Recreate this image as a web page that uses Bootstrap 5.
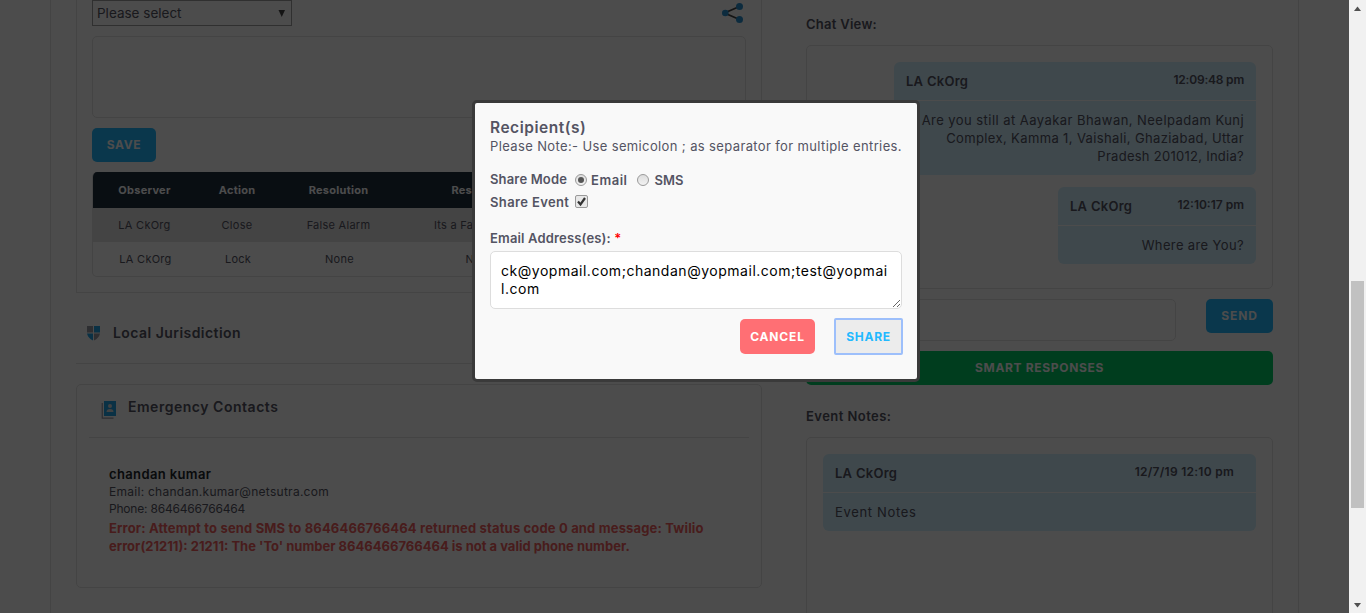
<!DOCTYPE html>
<html lang="en"><head><meta charset="utf-8"><title>Event details</title>
<link href="https://cdn.jsdelivr.net/npm/bootstrap@5.3.0/dist/css/bootstrap.min.css" rel="stylesheet">
<script src="https://cdn.jsdelivr.net/npm/bootstrap@5.3.0/dist/js/bootstrap.bundle.min.js"></script>
<style>
html,body{height:100%;overflow:hidden}
body{font-family:Inter,"Open Sans",sans-serif;font-size:13px;line-height:18px;color:#545463;background:#fff}
/* letter-spacing steps */
.t0{letter-spacing:-.2px}.t2{letter-spacing:.16px}.t3{letter-spacing:.27px}.t4{letter-spacing:.37px}
.t45{letter-spacing:.45px}.t5{letter-spacing:.52px}.t7{letter-spacing:.67px}.t8{letter-spacing:.85px}
.page-area{width:1349px;height:613px;overflow:hidden}
.sheet{margin-left:50px;width:1249px;height:613px;border:solid #e3e3e3;border-width:0 1px;padding-left:25px}
.main-col{width:686px}
.side-col{width:467px;margin-left:44px;padding-top:15px}
.edge{border:1px solid #e3e3e3}
.soft{border-radius:5px}
.drop-2{padding-top:2px}
.observe{height:293px;border-top:0;padding:0 15px}
.pick{width:200px;height:26px;border:1px solid #a0a0a0;padding:0 5px 0 4px;line-height:25px;font-size:13.5px}
.comment-box{height:82px;margin-top:10px}
.cta{height:34px;color:#fff;font-size:12px;font-weight:700;border-radius:5px;display:flex;align-items:center;justify-content:center}
.save-btn{width:64px;background:#22b9ff;margin:10px 0}
.send-btn{width:67px;background:#22b9ff}
.smart-btn{background:#00cc66;margin-top:10px}
.log{border-radius:5px;overflow:hidden;height:105px;font-size:11px;border:1px solid #e3e3e3;border-width:0 1px 1px}
.log-row{height:34px;line-height:34px;display:grid;grid-template-columns:105px 80px 123px 158px 1fr;text-align:center;margin:0 -1px}
.log-row.log-last{margin:0}
.log-head{height:36px;line-height:36px;background:#20303f;color:#fff;font-weight:700}
.log-odd{background:#e3e3e3}
.head-row{font-size:14px;font-weight:600}
.local{height:71px;padding:10px 0 0 10px;margin-bottom:20px;border-bottom:1px solid #e3e3e3}
.contacts{height:204px;padding:0 12px}
.contacts .head-row{height:53px;border-bottom:1px solid #e3e3e3;padding:0 0 8px 12px}
.contact-info{padding:27px 20px 0;font-size:12px;line-height:17px;white-space:nowrap}
.contact-name{font-size:13px;line-height:18px;font-weight:600;color:#212529}
.err{font-size:13px;line-height:18px;font-weight:700;color:#f06060;margin-top:2px}
.chat{height:244px;margin-top:12px;padding:16px}
.bubble{background:#d2f0ff;border-radius:6px;overflow:hidden}
.bubble-top{height:38px;padding:10px 12px 0;font-weight:600;display:flex;justify-content:space-between}
.stamp{font-size:12px;line-height:16px}
.bubble-body{border-top:1px solid #fff;padding:10px 12px}
.wide{width:362px;height:113px}
.narrow{width:198px;height:77px;margin-top:12px}
.reply{width:370px;height:42px}
.notes-title{margin-top:22px}
.notes{height:200px;margin-top:12px;padding:16px}
.notes .stamp{margin-right:10px}
.dim{position:fixed;left:0;top:0;width:1349px;height:613px;background:rgba(0,0,0,.7)}
.share-box{width:448px;height:282px;margin-top:100px;margin-left:472px;background:#f9f9f9;border:3px solid #3a3a3a;border-radius:5px;padding:15px 12px 0 15px}
.share-box h5{font-size:15.5px;line-height:19px;font-weight:600;margin:0}
.mode{height:23px}
.mode-top{margin-top:12px}
.knob{width:12px;height:12px;border:1px solid #9a9a9a;border-radius:50%;background:linear-gradient(#ddd,#f2f2f2);display:grid;place-items:center;margin:2px 4px 0 8px}
.knob.on::after{content:"";width:6px;height:6px;border-radius:50%;background:#555}
.knob.sms{margin-left:10px;margin-right:5px}
.tick{margin-left:6px}
.mail-label{margin-top:16px}
.mail-label .req{color:#f00}
.mail-field{width:412px;height:58px;border:1px solid #ddd;border-radius:5px;padding:10px;font-size:14px;line-height:18px;color:#000;display:block;resize:vertical;overflow:hidden;outline:0;margin-top:4px}
.share-actions{gap:19px;margin-top:9px;padding-right:2px}
.cancel-btn{width:75px;height:35px;background:#ff6f74}
.go-btn{width:69px;height:37px;background:#ececec;border:2px solid #9dbffb;border-radius:2px;color:#22b9ff}
.strip{width:17px;height:613px;background:#f1f1f1}
.thumb{width:13px;height:227px;background:#c1c1c1}
.strip-end{margin-top:88px}
</style></head>
<body class="d-flex">
<div class="page-area"><div class="sheet d-flex">
<main class="main-col">
 <section class="observe edge">
  <div class="d-flex justify-content-between">
   <div class="pick d-flex justify-content-between"><span>Please select</span><svg width="9" height="24"><path d="M1.500 9h6.500l-3.250 7z" fill="#444"/></svg></div>
   <svg width="24" height="26" viewBox="722 0 24 26"><path d="M739.500 6.500 724.500 13l15 6.500" fill="none" stroke="#444" stroke-width="1.800"/><g fill="#2b91d0"><circle cx="739.500" cy="6.500" r="3.500"/><circle cx="739.500" cy="19.500" r="3.500"/><circle cx="725.300" cy="13" r="3.300"/></g></svg>
  </div>
  <div class="comment-box edge soft"></div>
  <div class="cta save-btn t7">SAVE</div>
  <div class="log">
   <div class="log-row log-head t3"><span>Observer</span><span>Action</span><span>Resolution</span><span>Response</span></div>
   <div class="log-row log-odd t3"><span>LA CkOrg</span><span>Close</span><span>False Alarm</span><span>Its a False Alarm</span></div>
   <div class="log-row log-last t3"><span>LA CkOrg</span><span>Lock</span><span>None</span><span>None</span></div>
  </div>
 </section>
 <section class="local head-row d-flex align-items-center t45">
  <svg width="15" height="15" class="me-2"><path d="M1 0h6v6.500H1zM8 7.500h6Q13 12 8 14.500z" fill="#989aa5"/><path d="M8 0h6v6.500H8zM1 7.500h6v7Q2 12 1 7.500z" fill="#22a5e6"/></svg><span class="ms-1">Local Jurisdiction</span>
 </section>
 <section class="contacts edge soft">
  <div class="head-row d-flex align-items-center t5">
   <svg width="15" height="19" class="me-2 mt-1"><path d="M1.250 3v15.200H12.500" fill="none" stroke="#989aa5" stroke-width="1.200"/><path d="M3 1h12v15H3z" fill="#22a5e6"/><circle cx="9" cy="6" r="2" fill="#ddd"/><path d="M5.500 12q0-3 3.500-3t3.500 3z" fill="#ddd"/></svg><span class="ms-1">Emergency Contacts</span>
  </div>
  <div class="contact-info">
   <div class="contact-name t4">chandan kumar</div>
   <div class="t3">Email: chandan.kumar@netsutra.com</div>
   <div class="t0">Phone: 8646466766464</div>
   <div class="err"><span class="t2">Error: Attempt to send SMS to 8646466766464 returned status code 0 and message: Twilio</span><br>error(21211): 21211: The 'To' number 8646466766464 is not a valid phone number.</div>
  </div>
 </section>
</main>
<aside class="side-col">
 <div class="fw-semibold t3">Chat View:</div>
 <section class="chat edge soft d-flex flex-column align-items-end">
  <div class="bubble wide"><div class="bubble-top"><span class="t3">LA CkOrg</span><span class="stamp t0">12:09:48 pm</span></div>
   <div class="bubble-body text-end text-nowrap"><span class="t45">Are you still at Aayakar Bhawan, Neelpadam Kunj</span><br><span class="t4">Complex, Kamma 1, Vaishali, Ghaziabad, Uttar</span><br><span class="t3">Pradesh 201012, India?</span></div></div>
  <div class="bubble narrow"><div class="bubble-top"><span class="t3">LA CkOrg</span><span class="stamp">12:10:17 pm</span></div>
   <div class="bubble-body text-end t4">Where are You?</div></div>
 </section>
 <div class="d-flex justify-content-between mt-2 drop-2"><div class="reply edge soft"></div><div class="cta send-btn t8">SEND</div></div>
 <div class="cta smart-btn t7">SMART RESPONSES</div>
 <div class="fw-semibold t45 notes-title">Event Notes:</div>
 <section class="notes edge soft">
  <div class="bubble"><div class="bubble-top"><span class="t3">LA CkOrg</span><span class="stamp t3">12/7/19 12:10 pm</span></div>
   <div class="bubble-body t7">Event Notes</div></div>
 </section>
</aside>
</div></div>
<aside class="strip d-flex flex-column align-items-center">
 <svg width="17" height="17"><path d="M8.500 6.500 12 11H5z" fill="#505050"/></svg>
 <div class="thumb mt-auto"></div>
 <svg class="strip-end" width="17" height="17"><path d="M8.500 11.500 12 7H5z" fill="#505050"/></svg>
</aside>
<div class="dim">
 <div class="share-box">
  <h5 class="t5">Recipient(s)</h5>
  <div class="t4 text-nowrap">Please Note:- Use semicolon ; as separator for multiple entries.</div>
  <div class="mode mode-top d-flex align-items-center fw-semibold"><span class="t2">Share Mode</span><span class="knob on"></span><span class="t5 drop-2">Email</span><span class="knob sms"></span><span class="drop-2">SMS</span></div>
  <div class="mode d-flex align-items-center fw-semibold"><span class="t4">Share Event</span>
   <svg width="13" height="13" class="tick"><rect x=".5" y=".5" width="12" height="12" rx="1.500" fill="#e8e8e8" stroke="#9a9a9a"/><path d="m3 6.500 2.500 3L10 3" fill="none" stroke="#333" stroke-width="2.200"/></svg></div>
  <div class="fw-semibold t2 mail-label">Email Address(es): <span class="req">*</span></div>
  <textarea class="mail-field t5" spellcheck="false">ck@yopmail.com;chandan@yopmail.com;test@yopmai
l.com</textarea>
  <div class="d-flex justify-content-end align-items-center share-actions"><div class="cta cancel-btn t8">CANCEL</div><div class="cta go-btn t7">SHARE</div></div>
 </div>
</div>
</body></html>
